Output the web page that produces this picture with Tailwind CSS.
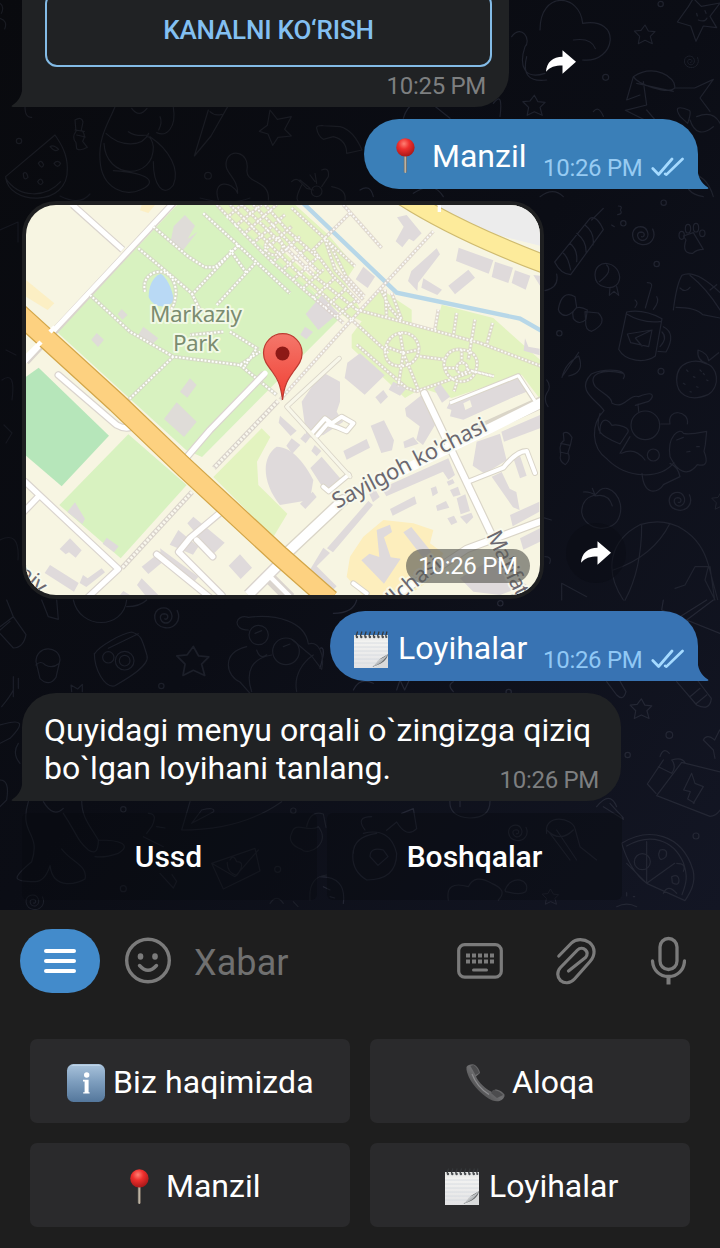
<!DOCTYPE html>
<html lang="uz">
<head>
<meta charset="utf-8">
<title>Chat</title>
<script src="https://cdn.jsdelivr.net/npm/@tailwindcss/browser@4"></script>
</head>
<body class="bg-[#1e1e1e]">
<!-- shared emoji symbols -->
<svg class="absolute size-0">
  <defs>
    <radialGradient id="red" cx=".42" cy=".3" r=".75"><stop offset="0" stop-color="#ff8074"/><stop offset=".4" stop-color="#ee2f2d"/><stop offset="1" stop-color="#9f1516"/></radialGradient>
    <linearGradient id="needle"><stop offset="0" stop-color="#6d6a62"/><stop offset=".5" stop-color="#c9bfae"/><stop offset="1" stop-color="#6a5f55"/></linearGradient>
    <linearGradient id="blue" x2="0" y2="1"><stop offset="0" stop-color="#a9c3dc"/><stop offset=".45" stop-color="#7f9fbf"/><stop offset="1" stop-color="#54779c"/></linearGradient>
    <linearGradient id="paper" x2="0" y2="1"><stop offset="0" stop-color="#dfe1e0"/><stop offset=".2" stop-color="#f3f3f1"/><stop offset="1" stop-color="#e3e3e5"/></linearGradient>
    <linearGradient id="curl" x2="1" y2="1"><stop offset=".3" stop-color="#fff"/><stop offset=".6" stop-color="#aeb1b4"/><stop offset=".8" stop-color="#f2f2f2"/></linearGradient>
    <linearGradient id="tel" x1="0" y1="1" x2="1" y2="0"><stop offset="0" stop-color="#2f2f30"/><stop offset=".5" stop-color="#6e6e70"/><stop offset="1" stop-color="#3c3c3e"/></linearGradient>
    <linearGradient id="marker" x2="0" y2="1"><stop offset="0" stop-color="#f4776b"/><stop offset="1" stop-color="#f13f33"/></linearGradient>
    <symbol id="pin" viewBox="0 0 40 40"><rect x="17.800" y="18" width="3" height="19" rx="1.400" fill="url(#needle)"/><circle cx="19.400" cy="11.400" r="9.200" fill="url(#red)"/></symbol>
    <symbol id="note" viewBox="0 0 40 40">
      <path d="M2 5h34v33H2z" fill="url(#paper)"/>
      <path d="M2 13h34M2 17h34M2 21h34M2 25h34M2 29h28M2 33h22" stroke="#d3d8de" stroke-width=".8"/>
      <path d="M20 38c5-1 7-4 10-7 2-2 4-4 6-5v12z" fill="#d9dadb"/>
      <path d="M20 37c4-2 6-6 8-8 2-2 6-3 8-5-1 6-6 10-16 13z" fill="#5e6263"/>
      <path d="M17 38c4-1 7-4 9-8 3-1 7-3 10-6-3 6-8 11-19 14z" fill="url(#curl)"/>
      <path stroke="#35383a" stroke-width="1.200" fill="none" d="M4 6.500l1.600-5M8.300 6.500l1.600-5M12.600 6.500l1.600-5M16.900 6.500l1.600-5M21.200 6.500l1.600-5M25.500 6.500l1.600-5M29.800 6.500l1.600-5M33.600 6.500l1.400-5"/>
      <g fill="#4a4d50"><circle cx="5" cy="7" r="1.200"/><circle cx="9.300" cy="7" r="1.200"/><circle cx="13.600" cy="7" r="1.200"/><circle cx="17.900" cy="7" r="1.200"/><circle cx="22.200" cy="7" r="1.200"/><circle cx="26.500" cy="7" r="1.200"/><circle cx="30.800" cy="7" r="1.200"/><circle cx="34.300" cy="7" r="1.100"/></g>
    </symbol>
    <symbol id="info" viewBox="0 0 40 40"><rect x="1" y="1" width="38" height="38" rx="6.500" fill="url(#blue)"/><path d="M6 2.300h28" stroke="#c8dbec" stroke-opacity=".7" stroke-width="1.200" stroke-linecap="round"/><circle cx="20.700" cy="12" r="2.700" fill="#fff"/><path d="M17 16.800h5.600v12.400h1v1.400h-6.400v-1.400h1.400v-10.800H17z" fill="#fff"/></symbol>
    <symbol id="phone" viewBox="0 0 40 40"><path d="M1.500 4C3 1.500 8 .5 10 2c3 2 4.500 5 5 8l-4 3.500c3 6.500 9.500 12.500 16 15.500 1.500-2 3-2.500 4.500-2.500 3.500.5 6 2.500 8 5 .5 3-2 5.500-5 6.500-4 .8-8-.5-11-2.500C17 31.500 9 24 4 14.500 2.500 11 1 7 1.500 4z" fill="url(#tel)"/><path d="M7 11c3 8 9 15.500 17 20.500" stroke="#8c8c8f" stroke-width="1.200" fill="none"/><path d="M8.500 2c3 2 5 5 5.500 8l-3.500 2-5-9zM28 27c4 0 8 2.500 10 5l-6 3-6-5z" fill="#4c4c4e"/></symbol>
    <symbol id="checks" viewBox="0 0 34 20"><path d="M1.800 11.500l5.800 6L21 2M14.200 16.800l1.200.8L31.500 2" fill="none" stroke="#a5daff" stroke-width="2.700" stroke-linecap="round" stroke-linejoin="round"/></symbol>
    <symbol id="share" viewBox="0 0 32 26"><path d="M17.500 1.200v6.500C8 8 1.500 13 1 22.800c4-4.800 9-6.300 16.500-6.300v8.200L31 12.800z" fill="#fff"/></symbol>
    <symbol id="tail" viewBox="0 0 12 24"><path d="M0 0c.3 11 4 18.500 11 22.500.8.600.4 1.500-.8 1.500H0z"/></symbol>
    <symbol id="star" viewBox="-20 -20 40 40"><path stroke-width="1.700" d="M0-15l5 9 10 1-7 7 3 11-11-5-10 5 2-11-8-8 10-1z"/></symbol>
    <symbol id="swirl" viewBox="-40 -40 80 80"><path d="M28-22c12 25-8 46-30 43-32-4-34-43-10-49 26-5 35 26 18 36-19 8-29-22-10-22 14 1 8 17 1 13"/></symbol>
    <!-- park footpaths, left part and plaza -->
    <path id="walksL" d="M430 95l105 90 50 32 30 0 65-60M385 160l90 75 70 60 30 60M240 300l120 110 130 75 200 25 60-40M490 485L350 620M580 55l120 110 140 130M545 300l140-150M620 330l120-130M405 290c-10-40 20-60 46-60s50 30 46 70-20 60-50 60M660 410l80 50-40 60M690 510l110 90M660 165l50 70M640 410l-100 10"/>
    <path id="walksR" d="M50 5L130 90 210 170 300 250 430 360M90 5l190 190 175 155M125 5L350 225l120 95M160 5l90 95 110 110M195 5l70 80 90 80M80 45l45-40M105 70l80-65M130 95l100-90M160 120l95-85M185 150l90-80M215 180l85-80M245 205l80-75M280 230l70-65M310 255l60-55M340 285l65-60M375 315l60-55M410 340l60-50M275 15l190 175M375 105l-35 35 60 80 80 80M375 110l30 90 85 90M388 120l50 100 55 60M450 30L375 105M430 5l115 130M700 85L455 350 240 590M540 255l30 60 35 40M555 260l5 80M575 270l30 80M470 320l150 40 220 60 185 70M455 350l110 100M715 320l-10 60M770 330l-10 70M825 350l-20 120M878 360l-18 65M470 425l150 130 30 10 170-60 60 15M600 390c-50 10-60 80-20 96 50 14 80-20 76-56-6-30-30-44-56-40M600 390l10 60-55-20M610 450l-15 100M610 450l45 110M610 450l46-10M785 440c-40-6-60 30-50 60 14 40 70 50 90 10 16-40 0-66-40-70M770 495a16 16 0 1032 0 16 16 0 10-32 0M785 440v36M735 495l35 0M802 500l80 20M660 460l75 10M770 540l-8 25M196 130a26 26 0 1052 0 26 26 0 10-52 0"/>
  </defs>
</svg>

<div class="relative flex h-[1248px] w-[720px] flex-col overflow-hidden bg-[#1e1e1e] font-['Roboto',sans-serif] text-white">

  <main class="relative flex h-[910px] flex-col overflow-hidden bg-linear-to-br from-[#090a0e] via-[#0b0d15] to-[#131624]">
    <!-- doodle wallpaper -->
    <svg class="absolute inset-0 h-[910px] w-[720px]" viewBox="0 0 720 910" fill="none" stroke="#1f222d" stroke-width="3.600" stroke-linecap="round" stroke-linejoin="round">
      <g transform="scale(.33333)" stroke="#191b22">
        <path d="M165 405L17 530c5 85 190 95 185-25 0-45-20-75-37-100zM17 535c40 60 120 60 165 10M150 440q10-8 26 8-10 10-26-8zM115 490q8-14 16 4-6 16-16-4zM162 490q10-12 20 0-8 18-20 0zM70 520q10-8 14 12-14 14-14-12zM113 545q10-16 16 2-8 14-16-2z"/>
        <path d="M225 360q20-12 24 6l-5 24q16 14 4 34l14 18q-20 12-32 4l-2-18q-14-16 0-34zM225 390l28 4M230 405l26 6"/>
        <path d="M345 320c-20 50-50 90-45 160 5 90 80 110 120 90 50-20 40-50-80-58M312 430c5 110 150 110 148 10q-5-30-18-30M318 400c40 40 110 44 128 0M450 410c60 40 90 100 70 145-30 40-60 0-60-70M395 325q22 30 46 0M385 395q20 15 60 10M520 322c10 60-20 90-50 76M480 350q8 16-4 40"/>
        <path d="M625 330L583 468l50-60 50-88M630 335q14 14 36 8"/>
        <path d="M810 330l22 28 42-8-20 38 20 20-40 4-16 24-14-34-26-8 24-18z"/>
        <path d="M655 600c-20-60 40-60 58-20 0-50-42-60-34-96 10-42 70-28 62 24-6 45 70 30 64 92M875 545q15-14 25 0l20 20 20 5M900 540l30 25M905 555c-20 40-20 50 10 60M930 525l15 20M945 520l5 30M965 510q24-10 20 20l-20 30M995 560q45 8 40 40"/><circle cx="950" cy="574" r="16"/><circle cx="624" cy="527" r="10"/><circle cx="57" cy="423" r="8"/>
        <path d="M950 385q-2-10 20-8l50 3q40 10 66 70l-46 10q0-40-40-50l-30 8q-16-10-20-33zM75 320q0 34 20 32M0 10q14 10 4 30M0 55q24 8 14 32"/>
      </g>
      <g transform="translate(360 0) scale(.33333)">
        <path d="M540 90c0-120 120-110 128-20 120-20 100 120 0 110M455 110c30-40 60 10 40 30-20 60 0 100 60 80M640 120q54-8 66 26M500 170q-20 80 60 70"/>
        <path d="M985 20l15-25 24 24 56-10-30 40 20 34-40-5-22 46-16-46-40-12zM1010 40l2 8M1035 32l3 8M1015 60q20 8 26-6"/>
        <path d="M820 230c60-40 130 0 124 34-20 20-110-10-124-34l-20 70 40-15M830 250l110 24M850 245l10 70-64 16 60 30M944 264l60 0 56-26-40 56 30 40M860 330l60 70M985 330q-50-20-24 20l22 20q14-40 2-40M1010 350q50-20 70 20M990 360q20 60 70 20"/>
        <path d="M130 355q20-70 90-40l50 40M400 310q30-40 20 40M700 335q16-20 30 14M0 570q30-20 40 20M160 580q60-40 90 10M540 590q40-30 70 0M980 520q60 0 80 70M980 530q-10 50 50 60"/>
        <circle cx="737" cy="232" r="9"/><circle cx="902" cy="12" r="8"/>
        <use href="#star" x="815" y="65" width="80" height="80"/><use href="#star" x="480" y="275" width="86" height="86"/><use href="#swirl" x="965" y="160" width="56" height="56"/>
      </g>
      <g transform="translate(540 200) scale(.33333)" stroke="#20232f">
        <path d="M150 55q20-10 40 34L92 224q-30-2-48-38zM70 160q14 10 22 50M90 130q24 20 20 55M110 100q30 24 28 56M135 75q30 24 24 60M50 222q8 40-35 50M155 60l35-35M215 75l8 5M235 18q14 0 6 12 8 12-8 14"/>
        <path d="M165 225c0-50 70-44 74 6 0 20-16 38-44 30-20-4-30-16-30-36zM200 195q20 20-22 50M210 262l-2 24 14-12 14 12-6-26"/>
        <path d="M55 328q10-60 50-38l5 32q-30 40-52 14zM98 340q10-30 44-10l-4 28q-20 20-38-2zM135 335l40 4q30 30-20 55-20-4-18-30z"/>
        <path d="M260 336q50-10 106 20l-20 112c-30 22-90 18-110-20zM260 342q50 30 104 22M370 380q40 20 8 76l-24-2M366 396q18 18-6 44M262 402l74-12-10 50-54-12zM336 390l-50 24 20 24M322 248q20 0 10 20l-16 56M285 300q12 8 0 22M350 290q10 14-10 38"/>
        <path d="M430 108l30-10 30 50q-20 0-32 12-34 2-20-40z"/><ellipse cx="425" cy="106" rx="8" ry="12"/><ellipse cx="444" cy="86" rx="8" ry="13"/><ellipse cx="468" cy="83" rx="8" ry="13"/><ellipse cx="487" cy="100" rx="8" ry="10"/>
        <path d="M400 330q10-80 26-104 40-20 114 52M408 322q60 0 80 22l52 10M450 226q50 40 90 104M420 264q16 16 30-2M510 270l20-16"/>
        <path d="M66 532c10-40 30-50 50-64q20 50-30 60M70 525l46-68"/>
        <path d="M410 540c0-60 60-62 84-50 40 5 50 70 10 94-60 25-94-4-94-44zM500 490q-30-8-26-40 30 10 32 32l30-24M440 510l4 4M460 530l5 2M430 550l5 3M480 510l4 4M500 540l4 2M470 560l4 2M450 575l4 1M490 520l3 4"/>
        <path d="M250 536c20-32-60-30-96-14-50 50 20 80 38 110-40 40-40 110 10 146 60 60 160 60 200 10M250 520c-60-14-110 0-84 40 20 20 50 30 50 50 40 20 50-30 80-20 50-20 46 0 30 14l-40 12M294 612l2 22M180 640c-20 60 10 70 60 92l20-30c20-20-30-30-44-26-20-30-38-14-36 24M362 672l28 0c-10-50 60-40 52 0M390 770c-10-60 30-90 40-70 20 5 40 0 70-6l-4 40-4 20q20 50-20 40c-30 40-60 20-82-24M306 820c6 70 50 60 64 34l50-24q-6-30-30-40M245 760q40-20 70 20M240 760l30-50M410 720l20-8M440 756l10-2M470 740h8"/><circle cx="316" cy="676" r="43"/><circle cx="340" cy="765" r="18"/>
        <path d="M70 700q12-10 26 12l-4 20-8 26q10 20-8 36-20-10-14-30l-2-20q4-20 12-22zM62 730l28 6M60 756l26 6"/>
        <path d="M165 885q-40 10-40 52c10 60 100 64 114 10 16-50-30-100-60-76l-14 14zM165 888q40-10 52 30M130 876q20-2 36 10M165 885l-8-20"/>
        <path d="M250 1200c-60-90-40-180 50-226 100-30 180 30 205 120l28 105M305 975c0 90-20 170-50 226M390 970c-40 80-110 120-170 140M405 1165l30-10 30-55 40 0-10 40 30 60M510 1100l14 100M65 1200v-50l75 40M20 540q16 20 0 40-10 20 4 40M0 950l34 10M15 1070q22 0 14 20"/>
        <circle cx="350" cy="192" r="8"/><circle cx="250" cy="70" r="8"/><circle cx="58" cy="400" r="8"/><circle cx="363" cy="514" r="9"/><circle cx="371" cy="8" r="8"/>
        <use href="#swirl" x="265" y="68" width="86" height="86"/><use href="#swirl" x="375" y="865" width="86" height="86"/><use href="#star" x="508" y="870" width="70" height="70"/>
      </g>
      <g transform="translate(320 600) scale(.33333)" stroke="#242734">
        <path d="M860 245l30 40q20 20 28-10l-20-35M1070 245l60 70q40 20 44-20l-40-52M1110 290l30-25M1130 310l30-25M1030 0l-5 30 175 70M1080 50L1160 0M1100 60l80-60"/>
        <path d="M1085 487l120 30M1085 487l-75 100 160 62q30 0 50-60M1030 480l-48 72 26 28M1015 500l40 20q16-20 0-40 30-10 40 8M1115 520l-24 50 20 5-8 22 20 12M1115 520l10 30 25 10-30 50M1020 470q10-30 28-10M1150 420q10-20 34 0l15-30M1150 420l30 30 5 25"/>
        <path d="M905 730c80-50 180-30 214 80 10 40-10 70-24 92L980 850c-40-30-60-70-75-120zM920 738c70-40 140-20 170 50 14 40 10 60-4 96M980 725v125l84-60M980 850l-60-60M1020 750q26-5 18 20-20 20-22-8zM1070 790q30 0 20 24M1055 830q20-10 22 10 0 20-20 8zM1030 880q14-30 40 0"/><circle cx="967" cy="785" r="24"/>
        <path d="M390 600q-5 50 60 54 60 0 60-50M420 600v20M830 620q40-50 60 0M850 620l60 38M870 610l40 44M920 878v10M940 890h4M890 920q30-15 60 0M100 270q20-40 60-20M230 270l10-30 14 30 14-30M400 275q-20-20 0-30M40 40q60 0 70-40M0 145q20-10 0 60"/>
        <circle cx="923" cy="465" r="8"/><circle cx="1048" cy="405" r="10"/><circle cx="1128" cy="708" r="9"/><circle cx="541" cy="10" r="8"/><circle cx="566" cy="276" r="8"/>
        <use href="#star" x="922" y="286" width="84" height="84"/>
        <path d="M245 640l35-14 10 60q-30 30-60-20l-30 25M100 760q0-50 70-60M130 700q80-20 100 60 0 80-90 80-50-30-40-90M150 770q0-30 40-20l14 20-30 26zM155 650q-50 0-20 40M385 900q-10-60 60-40 20-40 70-10 50 20 20 50M555 870c20-50 80-30 62 5-20 14-50 0-60 0zM680 700c-10-60 80-50 86-10l14 50 50 40M690 700l60 80M710 690l60 90M680 690q40 40 80 0M0 830q80 0 70 80M10 860l20 10M30 890l14 4"/><use href="#swirl" x="555" y="665" width="74" height="74"/><use href="#star" x="660" y="860" width="64" height="64"/>
      </g>
      <g transform="translate(0 600) scale(.33333)" stroke="#1c1f29">
        <path d="M0 100l40 44q30 0 38-40L40 50 0 80M0 90l30-26M20 0l20 50M125 0l20 50 30 8L170 0M220 0c20 90 150 90 160 0M380 20q40 0 60-20"/>
        <path d="M108 185c0-50 70-50 72-5l-12 52q-20 30-48 4zM108 195q14-15 28 0 20 12 40-4"/>
        <path d="M285 160c10-20 80-60 110-64 30 10 30 20 46 70 10 30-60 70-98 92-30 5-60-50-60-98zM325 145l90-44"/><circle cx="325" cy="172" r="17"/><circle cx="374" cy="182" r="28"/><circle cx="374" cy="182" r="16"/>
        <use href="#star" x="518" y="124" width="124" height="124"/><use href="#swirl" x="450" y="10" width="96" height="96"/>
        <path d="M745 90c-50 0-40-50 0-38 80-10 170 10 180 80 30-10 50 30 40 76l-30-40-60-50M740 140c-80 20-60 90-20 106l30 34M755 275c-20-60 0-100 60-110M890 275c-10-50 20-90 50-110M770 150q10 30 30 14M850 140l20-8M765 100l20-8"/><circle cx="776" cy="105" r="29"/><circle cx="858" cy="154" r="40"/>
        <path d="M40 230v60M55 235v30M40 270q-10 20-35 50M215 275l-2-20 20 12 14-14v22M0 375q100-30 30 40L0 430M55 430q-20 30 5 60M0 540q30 0 20 60L0 620M85 605c-30 100 40 90 10 180-60 50-60 60 10 60q30 0 45-48c10 80 90 50 105 40 10-40-40-50-70-90M190 640c40 60 40 80 75 110q30 20 30-30c-30-50-50-70-50-120M295 720c70 0 100 15 60 40q-40 14-70 10M130 605q30 50 60 20M570 605l-25 85q180 0 300-85M575 670l30-40q40-10 36 5zM445 640q30 0 10 40l-15 20M470 680l25 4M430 710l60 30M875 700c10-40 50 0 80-20 40 50-30 90-50 68-30-10-40-30-30-48zM920 680q10-50 50-38l8 40M635 790l130-45 15 68-110 54zM635 790l70 40 70-80M690 780q10-20 20 5 30 0 0 42-30-10-28-40M480 820l40 44 10-20-14-20M810 910q20-30 40 0M930 900q-5-70 50-75M880 905l14 15"/>
        <circle cx="484" cy="258" r="8"/><circle cx="370" cy="628" r="8"/><circle cx="880" cy="632" r="8"/><circle cx="833" cy="808" r="9"/><circle cx="370" cy="866" r="9"/><use href="#swirl" x="68" y="875" width="70" height="70"/>
      </g>
      <path stroke-width="1.200" stroke="#15171f" d="M2 380q14-10 10 20M4 425l8 8-6 10M6 350l10 5M0 230l18-8v20M0 540q20-10 18 20M60 196q20 10 30-2M200 198q30 8 50 0"/>
    </svg>

    <div class="relative flex h-[107px]">
      <section class="relative ml-[22px] h-full w-[487px] rounded-br-[34px] bg-[#202224] px-[23px]">
        <svg class="absolute bottom-0 -left-[11px] h-6 w-3 -scale-x-100 fill-[#202224]"><use href="#tail"/></svg>
        <button class="-mt-2 flex h-[75px] w-[447px] items-center justify-center rounded-[12px] border-2 border-[#83bbe6] text-[26px] leading-none font-medium tracking-[-.2px] text-[#83c0f2]">KANALNI KO‘RISH</button>
        <div class="flex justify-end pt-[5px] text-[24px] leading-[28px] text-[#7d7f80]"><span class="tracking-[-.3px]">10:25 PM</span></div>
      </section>
      <svg class="mt-[49px] ml-[36px] h-[26px] w-8"><use href="#share"/></svg>
    </div>

    <div class="relative mt-3 flex h-[70px] justify-end pr-[22px]">
      <section class="relative flex h-full w-[334px] rounded-[35px] rounded-br-none bg-[#3a7fb8] pl-[22px]">
        <svg class="absolute -right-[11px] bottom-0 h-6 w-3 fill-[#3a7fb8]"><use href="#tail"/></svg>
        <svg class="mt-[17px] size-10"><use href="#pin"/></svg>
        <span class="ml-[6px] w-[96px] text-[32px] leading-[74px]">Manzil</span>
        <span class="ml-[15px] w-[101px] pt-[12px] text-[24px] leading-[74px] tracking-[-.3px] whitespace-nowrap text-[#97cbf2]">10:26 PM</span>
        <svg class="mt-[38px] ml-[7px] h-5 w-[34px]"><use href="#checks"/></svg>
      </section>
    </div>

    <div class="relative mt-3 flex h-[398px]">
      <section class="relative ml-[22px] h-full w-[522px] overflow-hidden rounded-[34px] bg-[#1e1f21] p-1">
        <svg class="h-[390px] w-[514px] rounded-[30px]" viewBox="26 205 514 390" fill="none" font-family="Noto Sans">
          <path fill="#f7f5e2" d="M26 205h514v390H26z"/>
          <path fill="#d8f2c0" d="M177 205L57 332l129 118 16 7 138-139-20-20-98-93z"/>
          <!-- upper-left quarter: lake, roads, lawns -->
          <g transform="translate(10 195) scale(.33333)">
            <path fill="#fdeebd" fill-opacity=".8" d="M48 255l85 70-20 20-65-40zM395 30h40l-20 24-25-8z"/>
            <path fill="#b6e6ba" d="M48 545l38-27 211 204-142 152-107-92z"/>
            <path fill="#d8f2c0" d="M355 718L148 930l184 160 198-220z"/>
            <path fill="#dfdcd8" d="M525 60l30 32-22 40 30-22-44 56-38-22 10-50zM260 414l22 20-18 22-20-22zM335 342l18 18-16 14-14-16zM400 395l45 35-20 20-40-30zM540 550l20 20-28 38-22-18zM500 622l60 58-38 46-60-54z"/>
            <path fill="#b9d9f5" d="M452 236c20 10 40 60 38 80-10 26-60 26-74-10 0-30 10-60 36-70z"/>
            <path stroke="#dad4ce" stroke-width="22" d="M188 30l150 134M490 24L48 500"/>
            <path stroke="#fff" stroke-width="15" d="M184 26l154 138M493 20L44 500"/>
          </g>
          <!-- upper-right quarter -->
          <g transform="translate(200 203) scale(.33333)">
            <path fill="#e3f3c0" d="M50 5h235l100 90 80 95-25 38-60-85 70 120 30 55-30 35-150-120z"/>
            <path fill="#f7f5e2" d="M270 120l80 80-20 20-80-75zM440 30l-60 60-60-55 40-30z"/>
            <path fill="#e3f3c0" d="M545 260l90 60 0 50 70 10 20-75 155 40 145 130v120l-60-80-210 70-90-30-50 30-160-150 0-40 30-40-20-10z"/>
            <path fill="#ececec" d="M715 0h311v130L850 85 730 40z"/>
          </g>
          <g transform="translate(280 195) scale(.33333)">
            <path stroke="#cfbb70" stroke-width="58" d="M370 5c110 70 270 145 430 205"/>
            <path stroke="#fdeb9b" stroke-width="51" d="M370 5c110 70 270 145 430 205"/>
            <path stroke="#fff" stroke-width="10" d="M478 15v36"/>
            <path fill="#dfdadb" d="M380 60l45 55-24 24-14-8-20 26-20-18 24-44-20-28zM470 160l10 18-66 86-2 24-28-30 10-30zM430 250l56 34-14 16-48-22zM505 272l60-48 20 24-60 50zM536 158l104 38-14 40-98-38zM645 200l54 18-14 46-50-18zM705 226l46 16-14 42-42-20zM760 240l20 2v30zM250 215l35 30-22 34-36-26zM735 430l10 25 34 6v20l-48-14zM125 300l50 55-60 50-38-48zM75 395l24 16-20 22-18-14zM240 475l74 66-60 58-60-50 8-46zM310 585l14 20-22 22-16-20zM340 560l40 20-20 22-34-18zM480 565l30 40-24 18-24-42zM510 620l200-80 30 50-180 70-60-20z"/>
            <path stroke="#b7d7e8" stroke-width="13" d="M70 25l280 268 370 78 70 40"/>
          </g>
          <!-- footpaths -->
          <g transform="translate(10 195) scale(.33333)"><use href="#walksL" stroke="#d6d3c8" stroke-width="12" stroke-opacity=".75"/><use href="#walksL" stroke="#fff" stroke-width="6" stroke-dasharray="6 5"/></g>
          <g transform="translate(200 203) scale(.33333)"><use href="#walksR" stroke="#dad0ca" stroke-width="11" stroke-opacity=".75"/><use href="#walksR" stroke="#fff" stroke-opacity=".9" stroke-width="5.500" stroke-dasharray="5.500 5.500"/></g>
          <path stroke="#d9d3cb" stroke-width="5" d="M278 401l-64 67M192 492l-70 76"/>
          <path stroke="#faf8ee" stroke-width="3" stroke-dasharray="2.500 1.500" d="M278 401l-64 67M192 492l-70 76"/>
          <!-- lower-left quarter -->
          <g transform="translate(10 395) scale(.33333)">
            <path fill="#e3f3c0" d="M755 100l26 26-40 74 4 70 87 86-42 70-180-180z"/>
            <path fill="#dfdadb" d="M800 155c50 0 90 60 110 100l-10 60-90 15c-50-60-60-140-10-175zM195 322l30 50-8 15-45-36zM290 428l36 26-14 18-34-26zM180 430l35 36-18 22-20-16-10 6-18-16zM120 510l86 54-14 26-88-56zM275 520l10 12-56 44-20-12 10-24 14 10zM395 515l60-48 20 20-60 50zM505 405l60 50-16 24-70-30zM450 460l115 85-18 22-95-96zM690 478l36 40-34 34-36-40zM395 550l50 50h-40l-24-30zM340 588l20 12h-30zM532 385l18-20 94 78-34 34z"/>
            <path stroke="#dad4ce" stroke-width="23" stroke-linecap="round" stroke-linejoin="round" d="M45 260l280 262-90 84M85 305l-50 52M625 358l-85 71-34 42 130 130M560 435l48 50M440 478l160 130M530 187l70-82L760-60"/>
            <path stroke="#fff" stroke-width="16" stroke-linecap="round" stroke-linejoin="round" d="M45 260l280 262-90 84M85 305l-50 52M630 353l-90 76-34 42 130 130M560 435l48 50M440 478l160 130M530 187l70-82L765-65"/>
            <path stroke="#dad4ce" stroke-width="23" stroke-linecap="round" d="M145-60L320 90q24 14 46 6"/><path stroke="#fff" stroke-width="16" stroke-linecap="round" d="M145-60L320 90q24 14 46 6"/>
            <path stroke="#dad4ce" stroke-width="36" d="M805 510l-90 90M780 550l60 60"/><path stroke="#fff" stroke-width="28" d="M805 510l-90 90"/><path stroke="#fff" stroke-width="14" d="M780 545l60 60"/>
          </g>
          <!-- lower-right quarter -->
          <g transform="translate(280 395) scale(.33333)">
            <path fill="#fdeebd" d="M310 375l90 10 60 20-10 40 40 30-40 80-70 50H250l-50-60 10-60 40-60z"/>
            <path fill="#dfdadb" d="M65 20l60-90 55 30 0 60-10 30 20 30-60 40-50 10zM0 62l50 45-18 16-36-40zM35 130l26 20-24 26-18-24zM75 115l14 14-12 16-16-14zM104 150l20 18-14 16-16-16zM125 185l60 70-48 36-46-72zM98 290l12 16-34 36-16-16zM272 92l40-16 30 60-6 30-32 8zM190 168l70-36 10 26-70 36zM375 40l50-40 30 30 10 60-36 60-20-16 10-40-40-30zM370 140l30-14 16 20-42 14zM520 20l200-76 30 40-200 90-40-10zM590 140l70-24 20 80-66 40-36-24zM664 110l116-50v40l-108 40zM305 280l200-90 20 50-20 14-16-24-170 74zM265 290l20-8 14 24-20 16zM265 318l14 12-120 142-18-12zM330 342l74-38 6 22-72 36zM290 405l40-16 6 22-24 16 20 60 30 4-50 75-68-70 24-20 30 10zM370 412l24-16 60 74-24 20zM130 458l20 16-40 40 60 60-20 20-60-70zM452 280l16-6 6 20-16 10zM500 260l18-8 6 12-18 8zM510 285l24-10 8 24-22 6zM530 310l26-12 14 50-28 10zM468 332l30-14 10 20-36 10zM502 370l20-8 10 20-18 8zM540 365l34-12 6 14-20 20zM635 245l30-14 24 50 20 10 10 54-20-8zM700 190l20-8 20 60-20 8zM690 360l88-40v30l-80 44zM720 430l60-30v40l-50 24zM540 550l100-60 100 80-80 30-80-10z"/>
            <path fill="#f7f5e2" d="M550 25l20-10 6 20-20 10z"/>
            <g stroke="#dad5c8" stroke-linecap="round" stroke-linejoin="round"><path stroke-width="37" d="M20 475l170-160M600 105L800 15"/><path stroke-width="26" d="M790 376L560 462 350 600M433-5l200 420"/><path stroke-width="18" d="M95 115l40-45 20 15 30-20 35 20-20 24-28-12-30-10-30 35M570 258l100-40q40-50 70-50l25 66M130 275l16 14 60-50M220 565l40 30"/><path stroke-width="15" d="M20 35l190 210M20 35L178-110"/></g>
            <g stroke="#fff" stroke-linecap="round" stroke-linejoin="round"><path stroke-width="29" d="M20 475L190 315M300 260l330-160L800 15"/><path stroke-width="19" d="M790 376L560 462 350 600M433-5l200 420"/><path stroke-width="12" d="M95 115l40-45 20 15 30-20 35 20-20 24-28-12-30-10-30 35M570 258l100-40q40-50 70-50l25 66M130 275l16 14 60-50M220 565l40 30"/><path stroke-width="10" stroke="#f8f7ea" d="M20 35l190 210M20 35L178-110"/></g>
            <path stroke="#dad5c8" stroke-width="15" stroke-linejoin="round" d="M510 24L715-58l45 70"/><path stroke="#fff" stroke-width="9" stroke-linejoin="round" d="M510 24L715-58l50 76"/>
          </g>
          <!-- avenue -->
          <path stroke="#d3a648" stroke-width="21" d="M16 311l101 92 68 65 95 88 50 44"/>
          <path stroke="#fdd180" stroke-width="18.500" d="M16 311l101 92 68 65 95 88 50 44"/>
          <path stroke="#fff" stroke-width="4.500" d="M55 327l-5 5M41 342l-15 15"/>
          <!-- labels -->
          <g paint-order="stroke" stroke-linejoin="round" stroke="#f9fbf0" stroke-opacity=".8" stroke-width="4">
            <g fill="#7b8c70" font-size="22.500" text-anchor="middle"><text x="196" y="322" textLength="92">Markaziy</text><text x="196" y="351" textLength="46">Park</text></g>
            <g fill="#6b6870" font-size="22"><text transform="translate(337 509) rotate(-27.500)" textLength="171">Sayilgoh ko'chasi</text><text transform="translate(486 535) rotate(64)" textLength="70">Ma'rifat</text><text transform="translate(384 615) rotate(-40)">o'lchasi</text><text transform="translate(16 575) rotate(40)">niv</text></g>
          </g>
          <!-- location marker -->
          <path d="M282.500 400c-2-16-5-21-10-28-6-8-9-12-9-19a19.300 19.300 0 0138.600 0c0 7-3 11-9 19-5 7-8.600 12-10.600 28z" fill="url(#marker)" stroke="#bd3a31" stroke-width="1.200"/><circle cx="282.500" cy="353.500" r="7" fill="#8d1916"/>
        </svg>
        <span class="absolute right-[14px] bottom-[16px] flex h-[34px] w-[124px] items-center justify-center rounded-full bg-[#5a5b54]/65 text-[24px] tracking-[-.3px] whitespace-nowrap">10:26 PM</span>
      </section>
      <span class="mt-[322px] ml-[22px] flex size-[60px] items-center justify-center rounded-full bg-[#0a0c14]/50"><svg class="h-[26px] w-8"><use href="#share"/></svg></span>
    </div>

    <div class="relative mt-[12px] flex h-[70px] justify-end pr-[22px]">
      <section class="relative flex h-full w-[368px] rounded-[35px] rounded-br-none bg-[#3873b3] pl-[22px]">
        <svg class="absolute -right-[11px] bottom-0 h-6 w-3 fill-[#3873b3]"><use href="#tail"/></svg>
        <svg class="mt-[19px] size-10"><use href="#note"/></svg>
        <span class="ml-[6px] w-[130px] text-[32px] leading-[74px]">Loyihalar</span>
        <span class="ml-[15px] w-[101px] pt-[12px] text-[24px] leading-[74px] tracking-[-.3px] whitespace-nowrap text-[#90c8f5]">10:26 PM</span>
        <svg class="mt-[38px] ml-[7px] h-5 w-[34px]"><use href="#checks"/></svg>
      </section>
    </div>

    <div class="relative mt-[12px] ml-[22px] h-[108px] w-[599px] rounded-[34px] rounded-bl-none bg-[#202224] px-[22px] pt-[18px]">
      <svg class="absolute bottom-0 -left-[11px] h-6 w-3 -scale-x-100 fill-[#202224]"><use href="#tail"/></svg>
      <p class="text-[32px] leading-[38px] tracking-[.06px] whitespace-nowrap">Quyidagi menyu orqali o`zingizga qiziq</p>
      <div class="flex justify-between"><p class="text-[32px] leading-[38px] whitespace-nowrap">bo`lgan loyihani tanlang.</p><span class="pt-[16px] text-[24px] leading-[30px] tracking-[-.3px] text-[#7d7f80]">10:26 PM</span></div>
    </div>

    <div class="relative mt-3 ml-[22px] grid h-[87px] w-[600px] grid-cols-2 gap-[10px] text-[30px] leading-[87px] font-medium">
      <button class="rounded-[6px] bg-[#080a0e]/40 pr-[2px]">Ussd</button>
      <button class="rounded-[6px] bg-[#080a0e]/40">Boshqalar</button>
    </div>
  </main>

  <footer class="flex flex-1 flex-col">
    <div class="mt-[19px] flex h-[64px] items-center pl-5">
      <button class="flex h-16 w-20 flex-col items-center justify-center gap-[6px] rounded-[32px] bg-[#438bcb]"><i class="h-1 w-8 rounded-full bg-white"></i><i class="h-1 w-8 rounded-full bg-white"></i><i class="h-1 w-8 rounded-full bg-white"></i></button>
      <svg class="ml-6 size-12" viewBox="0 0 48 48" fill="none" stroke="#7b7b7b" stroke-width="3.400" stroke-linecap="round"><circle cx="24" cy="23.500" r="21.300"/><path d="M15.500 28.500q8.500 9.500 17 0"/><g fill="#7b7b7b" stroke="none"><ellipse cx="16.500" cy="19.500" rx="2.800" ry="3.300"/><ellipse cx="31" cy="19.500" rx="2.800" ry="3.300"/></g></svg>
      <span class="ml-[22px] w-[262px] pt-[3px] text-[36px] leading-none tracking-[.1px] text-[#707070]">Xabar</span>
      <svg class="h-12 w-12" viewBox="0 0 48 48" fill="none" stroke="#7b7b7b" stroke-width="3.200"><rect x="2.700" y="7.600" width="42.600" height="32.600" rx="6"/><path stroke-width="4" stroke-dasharray="4 2" d="M10 18.500h28M10 24.500h28"/><path stroke-linecap="round" stroke-width="3" d="M17.500 33h13"/></svg>
      <svg class="ml-[50px] h-12 w-12" viewBox="0 0 48 48" fill="none" stroke="#7b7b7b" stroke-width="3.200" stroke-linecap="round" stroke-linejoin="round"><path d="M4.800 18.500L17.500 5.500C22 1 30 1.200 35.500 5c6 5 6 13 .5 19L20.500 41.500C16 46.500 10 46 6.500 43 3 39.500 2.700 34 6.500 30L23.500 12.500c2.500-2.500 6-2 8 0s2 5 0 7.500L14.500 33.500" transform="translate(0 .5)"/></svg>
      <svg class="ml-[44px] h-[50px] w-10" viewBox="0 0 40 50" fill="none" stroke="#7b7b7b" stroke-width="3.300" stroke-linecap="round"><rect x="14" y="2.500" width="17" height="31" rx="8.500"/><path d="M6.500 25c.5 9 7 15.500 16 15.500S38 34 38.500 25"/><path stroke-linecap="butt" stroke-width="4" d="M22.500 40v8.500"/></svg>
    </div>

    <div class="mx-[30px] mt-[46px] grid grid-cols-2 gap-5 text-[32px] whitespace-nowrap">
      <button class="flex h-[84px] items-center rounded-[7px] bg-[#2a2a2c] pl-[36px]"><svg class="mt-[4px] size-10"><use href="#info"/></svg><span class="ml-[7px] pt-[2px] tracking-[.1px]">Biz haqimizda</span></button>
      <button class="flex h-[84px] items-center rounded-[7px] bg-[#2a2a2c] pl-[95px]"><svg class="mt-[4px] size-10"><use href="#phone"/></svg><span class="ml-[7px] pt-[2px]">Aloqa</span></button>
      <button class="flex h-[84px] items-center rounded-[7px] bg-[#2a2a2c] pl-[90px]"><svg class="mt-[4px] size-10"><use href="#pin"/></svg><span class="ml-[6px] pt-[2px]">Manzil</span></button>
      <button class="flex h-[84px] items-center rounded-[7px] bg-[#2a2a2c] pl-[73px]"><svg class="mt-[4px] size-10"><use href="#note"/></svg><span class="ml-[6px] pt-[2px]">Loyihalar</span></button>
    </div>
  </footer>
</div>
</body>
</html>
